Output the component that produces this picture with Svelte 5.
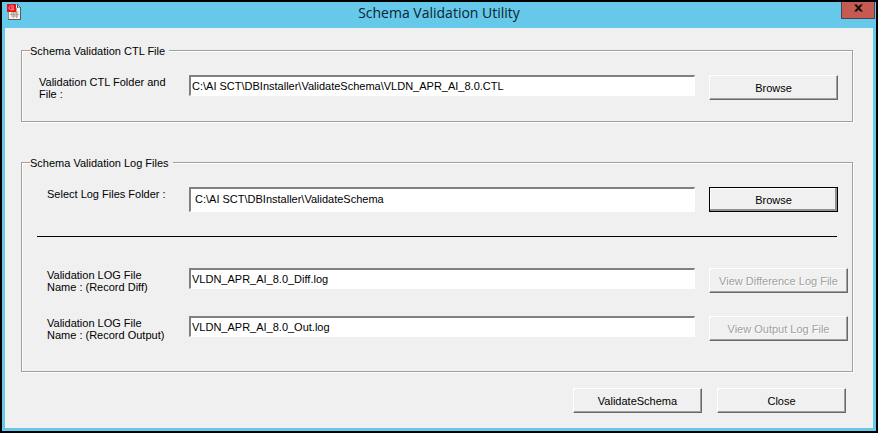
<script>
  let ctlFile = 'C:\\AI SCT\\DBInstaller\\ValidateSchema\\VLDN_APR_AI_8.0.CTL'
  let logFolder = 'C:\\AI SCT\\DBInstaller\\ValidateSchema'
  let diffLog = 'VLDN_APR_AI_8.0_Diff.log'
  let outLog = 'VLDN_APR_AI_8.0_Out.log'
  let validated = false
</script>

<div class="window">
  <header class="titlebar">
    <svg class="app-icon" width="15" height="16" viewBox="0 0 15 16" aria-hidden="true">
      <path d="M1 1h10l3 3v11H1z" fill="#f3f1ee" />
      <path d="M10 0h1v1h1v1h1v1h1v13H1v-1h12V4h-3z" fill="#565c62" />
      <path d="M11 1.500v2h2z" fill="#fff" />
      <path d="M1 8h1v7H1z" fill="#8d9297" />
      <path d="M4 7h7v6H4z" fill="#d8bcb2" />
      <path d="M3 10h9v1H3zM6 8h1v6H6zM9 4h1v10H9z" fill="#b5a7a0" />
      <rect width="9" height="8" fill="#e0161c" />
      <path d="M7 2.500C4 1 2 2.500 2 4s2 2.500 5 1.500M4 4h3" stroke="#ff9d98" fill="none" />
    </svg>
    <h1>Schema Validation Utility</h1>
    <button class="close" aria-label="Close window">
      <svg width="9" height="8" viewBox="0 0 10 8" aria-hidden="true">
        <path d="M0 0h3l2 2.400L7 0h3L6.500 4 10 8H7L5 5.600 3 8H0l3.500-4z" fill="#111" />
      </svg>
    </button>
  </header>

  <main>
    <fieldset>
      <legend>Schema Validation CTL File</legend>
      <div class="row">
        <label for="ctl-file">Validation CTL Folder and File :</label>
        <input id="ctl-file" type="text" bind:value={ctlFile} />
        <button class="btn">Browse</button>
      </div>
    </fieldset>

    <fieldset class="logs">
      <legend>Schema Validation Log Files</legend>
      <div class="row">
        <label for="log-folder">Select Log Files Folder :</label>
        <input id="log-folder" class="tall" type="text" bind:value={logFolder} />
        <button class="btn default">Browse</button>
      </div>
      <hr />
      <div class="row">
        <label for="diff-log">Validation LOG File<br />Name : (Record Diff)</label>
        <input id="diff-log" type="text" bind:value={diffLog} />
        <button class="btn wide" disabled={!validated}>View Difference Log File</button>
      </div>
      <div class="row">
        <label for="out-log">Validation LOG File<br />Name : (Record Output)</label>
        <input id="out-log" type="text" bind:value={outLog} />
        <button class="btn wide" disabled={!validated}>View Output Log File</button>
      </div>
    </fieldset>

    <footer>
      <button class="btn">ValidateSchema</button>
      <button class="btn">Close</button>
    </footer>
  </main>
</div>

<style>
  :global(body) { margin: 0; }
  .window {
    box-sizing: border-box; min-height: 100vh; border: 2px solid #000;
    background: #66c9ea; color: #000; display: flex; flex-direction: column;
    font: 11px/12px "Liberation Sans", Arial, sans-serif;
  }
  .titlebar {
    display: grid; grid-template-columns: 1fr auto 1fr; align-items: start;
    height: 26px; padding: 0 1px;
  }
  .app-icon { display: block; margin: 2px 0 0 4px; }
  h1 {
    margin: 0; color: #0b2530;
    font: 400 14px/22px "Open Sans", "Noto Sans", sans-serif;
  }
  .close {
    justify-self: end; display: flex; justify-content: center; align-items: center;
    width: 34px; height: 17px; padding: 0 0 4px;
    border: 1px solid #4b3f50; border-top: 0; background: #c75a50;
  }
  main {
    flex: 1; margin: 0 3px 3px; padding: 15px 20px 15px 16px; background: #f0f0f0;
  }
  fieldset {
    min-width: 0; margin: 0; padding: 0 0 21px;
    border: 1px solid #a0a0a0;
    box-shadow: 1px 1px 0 #fff, inset 1px 1px 0 #fff;
  }
  .logs { margin-top: 33px; padding-bottom: 30px; }
  legend { margin-left: 8px; padding: 2px 4px 0 0; background: #f0f0f0; }
  .row {
    display: grid; grid-template-columns: 137px 1fr 139px; column-gap: 14px;
    align-items: start; min-height: 25px; margin-top: 18px; padding: 0 4px 0 16px;
  }
  .row label { padding: 1px 0 0 1px; }
  .logs label { padding-left: 9px; }
  .logs hr + .row { margin-top: 31px; }
  .logs .row + .row { margin-top: 23px; }
  hr { height: 1px; margin: 24px 15px 0; border: 0; background: #000; }
  input {
    box-sizing: border-box; width: 100%; min-width: 0; height: 21px; padding: 0 1px;
    border: 1px solid; border-color: #808080 #fff #fff #808080; border-radius: 0;
    border-width: 2px 1px 1px 2px; background: #fff; color: #000; font: inherit;
  }
  .tall { height: 25px; padding: 0 4px 3px; }
  .btn {
    box-sizing: border-box; width: 129px; height: 25px; padding: 0;
    border: 1px solid; border-color: #fff #696969 #696969 #fff; border-radius: 0;
    box-shadow: inset -1px -1px 0 #a0a0a0; background: #f0f0f0; color: #000; font: inherit;
  }
  .wide { width: 139px; }
  .btn.default { border-color: #000; box-shadow: inset -2px -2px 0 #909090, inset 1px 1px 0 #fff; }
  .btn:disabled { color: #a0a0a0; text-shadow: 1px 1px 0 #fff; }
  footer { display: flex; justify-content: flex-end; gap: 15px; margin-top: 16px; padding-right: 7px; }
</style>
